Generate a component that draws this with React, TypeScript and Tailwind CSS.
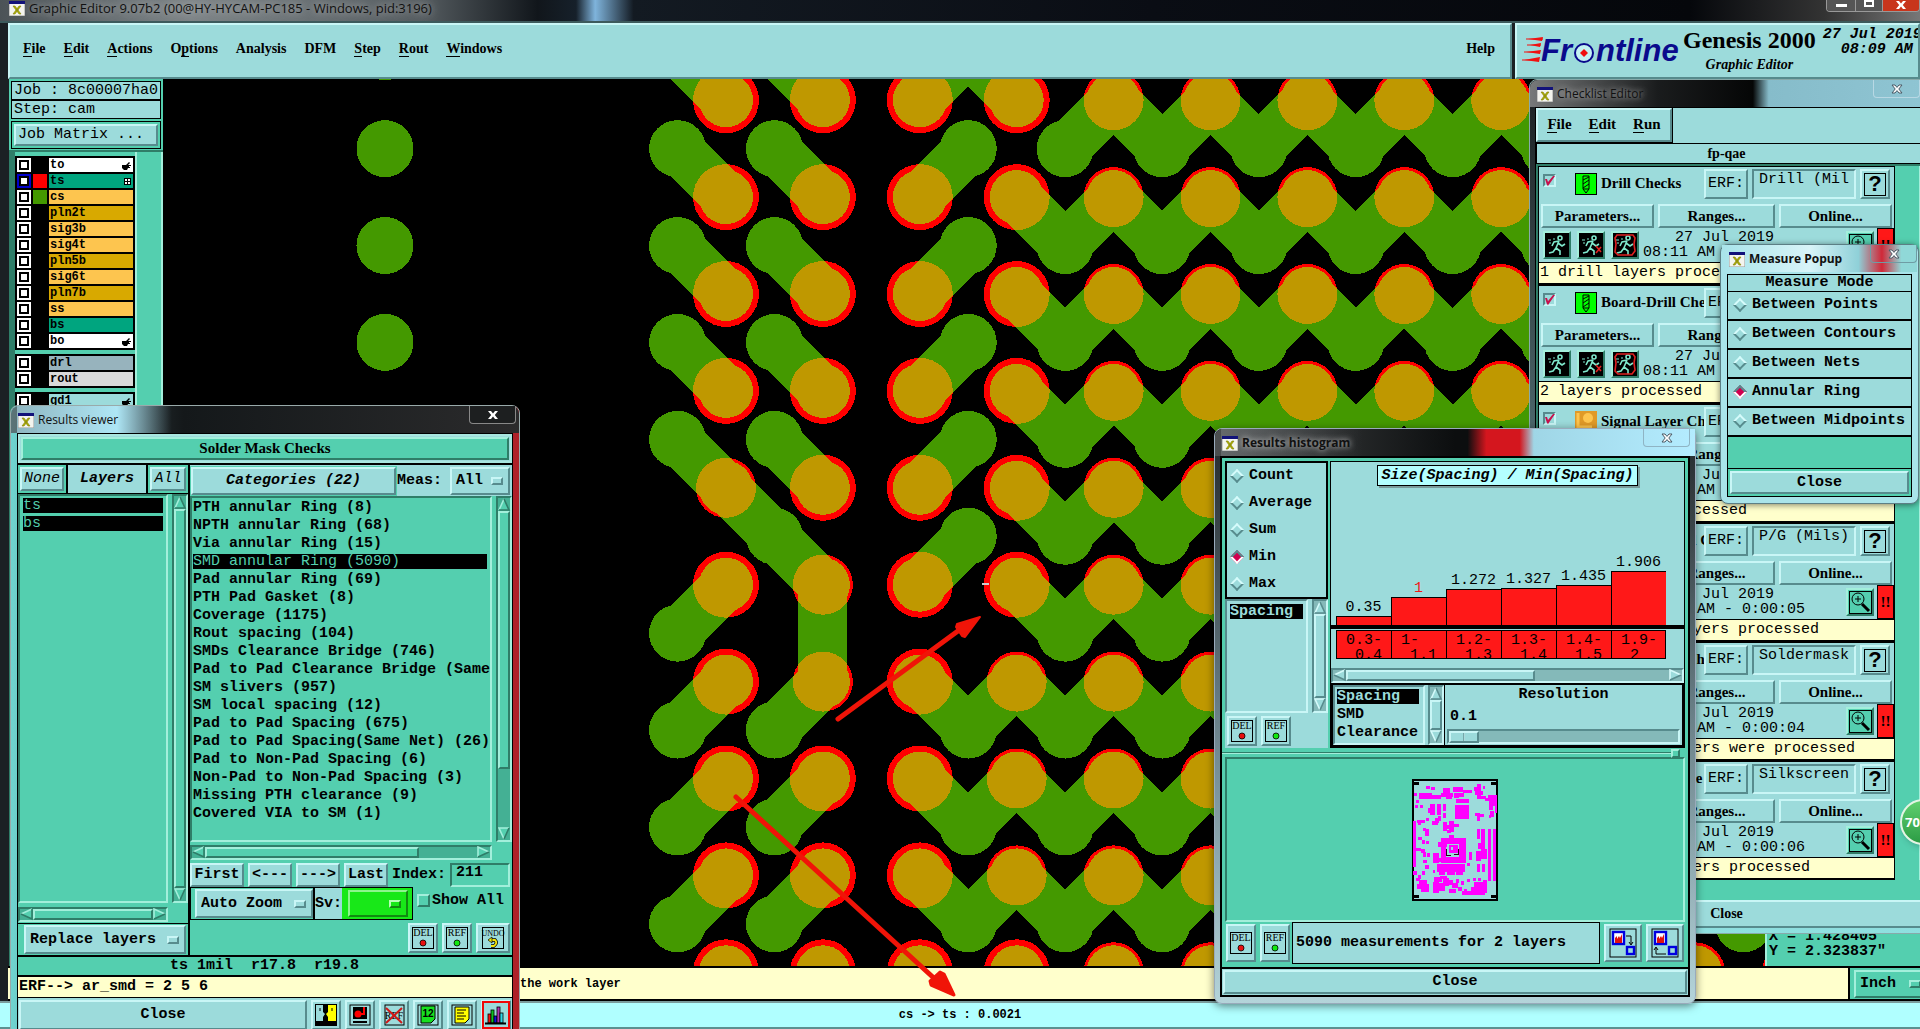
import { ReactNode } from "react";

const MONO = "font-['Liberation_Mono',monospace]";
const SERIF = "font-['Liberation_Serif',serif] font-bold";
const SANS = "font-['Open_Sans',sans-serif]";

const RAISED = "border-2 border-t-[#c9f6f6] border-l-[#c9f6f6] border-b-[#578b8d] border-r-[#578b8d] bg-[#9cdbdb]";
const SUNKEN = "border-2 border-t-[#578b8d] border-l-[#578b8d] border-b-[#c9f6f6] border-r-[#c9f6f6]";
const TEAL_RAISED = "border-2 border-t-[#a3efdb] border-l-[#a3efdb] border-b-[#2f7d68] border-r-[#2f7d68] bg-[#54cfaf]";
const TEAL_SUNKEN = "border-2 border-t-[#2f7d68] border-l-[#2f7d68] border-b-[#a3efdb] border-r-[#a3efdb]";

const menus = [
  { name: "File", hot: 0 },
  { name: "Edit", hot: 0 },
  { name: "Actions", hot: 0 },
  { name: "Options", hot: 1 },
  { name: "Analysis", hot: -1 },
  { name: "DFM", hot: -1 },
  { name: "Step", hot: 0 },
  { name: "Rout", hot: 0 },
  { name: "Windows", hot: 0 },
];

const layerGroups = [
  [
    { name: "to", bg: "bg-white", swatch: "bg-black", mark: "hand" },
    { name: "ts", bg: "bg-[#00a57f]", swatch: "bg-[#ff0000]", mark: "grid", active: true },
    { name: "cs", bg: "bg-[#fdc54f]", swatch: "bg-[#449900]" },
    { name: "pln2t", bg: "bg-[#d8a900]", swatch: "bg-black" },
    { name: "sig3b", bg: "bg-[#fdc54f]", swatch: "bg-black" },
    { name: "sig4t", bg: "bg-[#fdc54f]", swatch: "bg-black" },
    { name: "pln5b", bg: "bg-[#d8a900]", swatch: "bg-black" },
    { name: "sig6t", bg: "bg-[#fdc54f]", swatch: "bg-black" },
    { name: "pln7b", bg: "bg-[#d8a900]", swatch: "bg-black" },
    { name: "ss", bg: "bg-[#fdc54f]", swatch: "bg-black" },
    { name: "bs", bg: "bg-[#00a57f]", swatch: "bg-black" },
    { name: "bo", bg: "bg-white", swatch: "bg-black", mark: "hand" },
  ],
  [
    { name: "drl", bg: "bg-[#97b3bd]", swatch: "bg-black" },
    { name: "rout", bg: "bg-[#d9d9d9]", swatch: "bg-black" },
  ],
  [{ name: "gd1", bg: "bg-[#9cdbdb]", swatch: "bg-black", mark: "hand" }],
] as { name: string; bg: string; swatch: string; mark?: string; active?: boolean }[][];

const categories = [
  "PTH annular Ring (8)",
  "NPTH annular Ring (68)",
  "Via annular Ring (15)",
  "SMD annular Ring (5090)",
  "Pad annular Ring (69)",
  "PTH Pad Gasket (8)",
  "Coverage (1175)",
  "Rout spacing (104)",
  "SMDs Clearance Bridge (746)",
  "Pad to Pad Clearance Bridge (Same",
  "SM slivers (957)",
  "SM local spacing (12)",
  "Pad to Pad Spacing (675)",
  "Pad to Pad Spacing(Same Net) (26)",
  "Pad to Non-Pad Spacing (6)",
  "Non-Pad to Non-Pad Spacing (3)",
  "Missing PTH clearance (9)",
  "Covered VIA to SM (1)",
];

const bars = [
  { value: "0.35", height: 9, from: "0.3-", to: "0.4" },
  { value: "1", height: 28, from: "1-", to: "1.1" },
  { value: "1.272", height: 36, from: "1.2-", to: "1.3" },
  { value: "1.327", height: 37, from: "1.3-", to: "1.4" },
  { value: "1.435", height: 40, from: "1.4-", to: "1.5" },
  { value: "1.906", height: 54, from: "1.9-", to: "2" },
];

const checks = [
  { title: "Drill Checks", erf: "Drill (Mil", took: "0:00:01", result: "1 drill layers processed", icon: "drill" },
  { title: "Board-Drill Checks", erf: "Board (Mils", took: "0:00:01", result: "2 layers processed", icon: "drill" },
  { title: "Signal Layer Checks", erf: "Signal", took: "0:00:12", result: "4 layers were processed", icon: "signal" },
  { title: "Power/Ground Checks", erf: "P/G (Mils)", took: "0:00:05", result: "2 power/ground layers processed", icon: "signal" },
  { title: "Solder Mask Check", erf: "Soldermask", took: "0:00:04", result: "2 solder mask layers were processed", icon: "signal" },
  { title: "Silk Screen Che", erf: "Silkscreen", took: "0:00:06", result: "2 silk screen layers processed", icon: "signal" },
];

/* ---------- small parts ---------- */

function Hot({ name, hot }: { name: string; hot: number }) {
  if (hot < 0) return <>{name}</>;
  return (
    <>
      {name.slice(0, hot)}
      <span className="border-b border-black">{name[hot]}</span>
      {name.slice(hot + 1)}
    </>
  );
}

function XIcon() {
  return (
    <svg width="16" height="15" viewBox="0 0 16 15" className="shrink-0">
      <rect width="16" height="15" fill="#f4f4ee" stroke="#999" />
      <rect width="16" height="3" fill="#12127a" />
      <path d="M4 5h2l6 8h-2z M10 5h2l-6 8h-2z" fill="#b0b000" stroke="#80800a" strokeWidth="0.6" />
    </svg>
  );
}

function CloseGlyph({ outline = false }: { outline?: boolean }) {
  return (
    <svg width="12" height="10" viewBox="0 0 12 10">
      <path
        d="M1 1h3l2 2.4L8 1h3L7.8 5 11 9H8L6 6.6 4 9H1l3.2-4z"
        fill="#fff"
        stroke={outline ? "#4a5a66" : "none"}
        strokeWidth="1"
      />
    </svg>
  );
}

function TitleBar({ title, close, outline = false, glow = "" }: { title: string; close: string; outline?: boolean; glow?: string }) {
  return (
    <div className="flex h-[27px] items-start justify-between">
      <div className="flex items-center gap-1 pt-[6px] pl-[1px]">
        <XIcon />
        <span className={`${SANS} ${glow} text-[12px] leading-4 text-[#111]`}>{title}</span>
      </div>
      <button aria-label="Close window" className={`flex h-[18px] w-[47px] items-center justify-center rounded-b border border-t-0 ${close}`}>
        <CloseGlyph outline={outline} />
      </button>
    </div>
  );
}

function Arrow({ dir, teal = false }: { dir: "up" | "down" | "left" | "right"; teal?: boolean }) {
  const shapes = { up: "M6 1 11 12H1z", down: "M6 12 1 1h10z", left: "M1 6 12 1v10z", right: "M12 6 1 1v10z" };
  const light = teal ? "#a3efdb" : "#d6fbfb";
  const dark = teal ? "#2f7d68" : "#578b8d";
  const edges = {
    up: ["M6 1 1 12", "M1 12h10L6 1"],
    down: ["M11 1H1l5 11", "M6 12 11 1"],
    left: ["M1 6 12 1", "M1 6l11 5V1"],
    right: ["M1 11V1l11 5", "M12 6 1 11"],
  };
  return (
    <svg width="13" height="13" viewBox="0 0 13 13" className="shrink-0" fill="none">
      <path d={shapes[dir]} fill={teal ? "#54cfaf" : "#9cdbdb"} />
      <path d={edges[dir][0]} stroke={light} strokeWidth="1.6" />
      <path d={edges[dir][1]} stroke={dark} strokeWidth="1.6" />
    </svg>
  );
}

function VScroll({ teal = false, thumb = "flex-1" }: { teal?: boolean; thumb?: string }) {
  return (
    <div className={`flex w-4 shrink-0 flex-col items-center ${teal ? `${TEAL_SUNKEN} bg-[#44b094]` : `${SUNKEN} bg-[#84b9b9]`}`}>
      <Arrow dir="up" teal={teal} />
      <div className={`w-full ${thumb} ${teal ? TEAL_RAISED : RAISED}`} />
      {thumb !== "flex-1" && <div className="flex-1" />}
      <Arrow dir="down" teal={teal} />
    </div>
  );
}

function HScroll({ teal = false, thumb = "flex-1", className = "" }: { teal?: boolean; thumb?: string; className?: string }) {
  return (
    <div className={`flex h-[15px] items-center ${className} ${teal ? `${TEAL_SUNKEN} bg-[#44b094]` : `${SUNKEN} bg-[#84b9b9]`}`}>
      <Arrow dir="left" teal={teal} />
      <div className={`h-full ${thumb} ${teal ? TEAL_RAISED : RAISED}`} />
      {thumb !== "flex-1" && <div className="flex-1" />}
      <Arrow dir="right" teal={teal} />
    </div>
  );
}

function OptionMenu({ label, value, className = "", box = RAISED, bar = RAISED }: { label: string; value: string; className?: string; box?: string; bar?: string }) {
  return (
    <div className={`relative flex items-center ${box} ${className}`}>
      <select aria-label={label} className="h-full w-full appearance-none bg-transparent pl-1 font-bold outline-none">
        <option>{value}</option>
      </select>
      <span className={`pointer-events-none absolute right-[5px] h-2 w-3 ${bar}`} />
    </div>
  );
}

function Radio({ name, label, checked = false }: { name: string; label: string; checked?: boolean }) {
  return (
    <label className="flex items-center gap-[5px]">
      <input
        type="radio"
        name={name}
        defaultChecked={checked}
        className="m-[2px] size-[10px] rotate-45 appearance-none border-2 border-t-[#d6fbfb] border-l-[#d6fbfb] border-r-[#578b8d] border-b-[#578b8d] bg-[#9cdbdb] checked:border-t-[#578b8d] checked:border-l-[#578b8d] checked:border-r-white checked:border-b-white checked:bg-[#d1004f]"
      />
      {label}
    </label>
  );
}

function IconButton({ label, className = "", children }: { label: string; className?: string; children: ReactNode }) {
  return (
    <button aria-label={label} className={`flex size-[30px] shrink-0 items-center justify-center ${RAISED} ${className}`}>
      {children}
    </button>
  );
}

function TagIcon({ text, color }: { text: string; color?: string }) {
  return (
    <svg width="24" height="24" viewBox="0 0 24 24" fontFamily="Liberation Serif, serif" fontWeight="normal" fontSize={text.length > 3 ? 8 : 10} textAnchor="middle">
      <rect x="1.5" y="1.5" width="21" height="21" fill="none" stroke="#000" />
      <text x="12" y="10">{text}</text>
      {color ? (
        <circle cx="12" cy="17" r="3" fill={color} stroke="#000" strokeWidth="0.8" />
      ) : (
        <>
          <path d="M10 14h4q3 3-1 6h-3" fill="none" stroke="#000" strokeWidth="3.4" />
          <path d="M10 14h4q3 3-1 6h-3" fill="none" stroke="#f4e60a" strokeWidth="1.8" />
          <path d="m11 11-4 3 4 3z" fill="#f4e60a" stroke="#000" strokeWidth="0.7" />
        </>
      )}
    </svg>
  );
}

function DelRef({ className = "" }: { className?: string }) {
  return (
    <>
      <IconButton label="Delete" className={className}><TagIcon text="DEL" color="#e81010" /></IconButton>
      <IconButton label="Refresh" className={className}><TagIcon text="REF" color="#10e810" /></IconButton>
    </>
  );
}

function Hand() {
  return (
    <svg width="9" height="9" viewBox="0 0 9 9">
      <path d="M0 4h4l3-3 1 1-2 2h3v1H7v1h1v1H6L5 9H2L0 7z" />
    </svg>
  );
}

function GridMark() {
  return (
    <svg width="7" height="7" viewBox="0 0 7 7" shapeRendering="crispEdges">
      <path d="M0 0h7v7H0z" />
      <path d="M1 1h2v2H1zM4 1h2v2H4zM1 4h2v2H1zM4 4h2v2H4z" fill="#fff" />
    </svg>
  );
}

/* ---------- main window ---------- */

function Frontline() {
  return (
    <svg width="162" height="32" viewBox="0 0 162 32" fontFamily="Liberation Sans, sans-serif" fontSize="31" fontWeight="bold" fontStyle="italic" fill="#0a0a8c">
      <path d="M7 4 22 2 21 6z M9 10 20 8 19 12z M5 17 20 15 19 19z M3 25 19 22 18 27z" fill="#f01010" />
      <path d="M5 4h17M6 10h14M3 17h16M1 25h17" stroke="#f01010" />
      <text x="20" y="26">Fr</text>
      <circle cx="63" cy="18" r="9" fill="#c4f2f2" stroke="#0a0a8c" strokeWidth="2" />
      <path d="m63 14 4 4-4 4-4-4z" fill="#f01010" />
      <text x="75" y="26">ntline</text>
    </svg>
  );
}

function Header() {
  return (
    <header className="flex h-[58px] shrink-0 gap-[3px] border-t-2 border-[#3d5a5c] pl-2">
      <nav className={`flex flex-1 items-center justify-between pr-[15px] pb-1 pl-[13px] ${SERIF} text-[14px] ${RAISED}`}>
        <div className="flex gap-[18px]">
          {menus.map((m) => (
            <button key={m.name}><Hot {...m} /></button>
          ))}
        </div>
        <button>Help</button>
      </nav>
      <div className={`flex w-[405px] items-start overflow-hidden pt-[2px] pl-[4px] ${RAISED}`}>
        <div className="shrink-0 pt-[8px]"><Frontline /></div>
        <div className={`shrink-0 text-center ${SERIF}`}>
          <div className="text-[24px] leading-[26px]">Genesis 2000</div>
          <div className="text-[14px] leading-6 italic">Graphic Editor</div>
        </div>
        <div className={`${MONO} ml-[7px] shrink-0 text-right font-bold italic leading-[15px]`}>
          27 Jul 2019<br />08:09 AM&nbsp;
        </div>
      </div>
    </header>
  );
}

function LayerPanel() {
  return (
    <aside className={`${MONO} ml-[9px] flex w-[154px] shrink-0 flex-col overflow-hidden bg-[#54cfaf] pt-[2px]`}>
      <div className="mx-[2px] h-[19px] border border-black bg-[#9cdbdb] pl-[2px] whitespace-pre">Job : 8c00007ha0</div>
      <div className="mx-[2px] h-[19px] border border-black bg-[#9cdbdb] pl-[2px]">Step: cam</div>
      <div className="mx-[2px] mt-[2px] border border-black p-[2px]">
        <button className={`h-[22px] w-full pl-[2px] text-left leading-[18px] ${RAISED}`}>Job Matrix ...</button>
      </div>
      <div className="mt-[1px] flex flex-1 border-t-2 border-[#2f7d68]">
        <div className="flex w-[128px] flex-col gap-1 border-r-2 border-l-6 border-r-[#a3efdb] border-l-[#2f7d68] pt-1">
          {layerGroups.map((group, i) => (
            <ul key={i} className="flex flex-col gap-[2px] border border-black bg-black px-[1px] py-[1px]">
              {group.map((l) => (
                <li key={l.name}>
                  <label className="flex h-[14px] items-stretch gap-[2px] text-[12px] leading-[14px] font-bold">
                    <span className={`flex w-[14px] items-center justify-center ${l.active ? "bg-[#0000cc]" : "bg-white"}`}>
                      <input type="checkbox" className="size-[10px] appearance-none border-2 border-black bg-white" />
                    </span>
                    <span className={`w-[14px] ${l.swatch}`} />
                    <span className={`flex flex-1 items-center justify-between pr-[2px] pl-[1px] ${l.bg}`}>
                      {l.name}
                      {l.mark === "hand" && <Hand />}
                      {l.mark === "grid" && <GridMark />}
                    </span>
                  </label>
                </li>
              ))}
            </ul>
          ))}
        </div>
        <div className="flex-1 border-r-2 border-[#a3efdb]" />
      </div>
    </aside>
  );
}

const PITCH = 96.9;
const padX = (c: number) => 726 + PITCH * c;
const padY = (r: number) => 100.2 + PITCH * r;

type Point = [number, number];
type Trace = [Point, Point];

function buildBoard() {
  const traces: Trace[] = [];
  const vias: Point[] = [];
  const half = PITCH / 2;
  const link = (c: number, r: number, dx: number, dy: number) => {
    const via: Point = [padX(c) + half * dx, padY(r) + half * dy];
    traces.push([[padX(c), padY(r)], via]);
    vias.push(via);
  };
  for (let r = 0; r <= 4; r++) {
    link(0, r, -1, -1);
    link(1, r, -1, -1);
  }
  for (let r = 5; r <= 8; r++) link(0, r, -1, 1);
  for (let r = 6; r <= 8; r++) link(1, r, -1, 1);
  for (let r = 0; r <= 5; r++) link(2, r, 1, -1);
  link(0, 4, 1, 1);
  link(1, 5, -1, -1);
  traces.push([[padX(1), padY(5)], [padX(1), padY(6)]]);
  link(3, 0, -1, -1);
  for (let r = 0; r <= 8; r++) {
    const first = r === 0 ? 4 : r < 6 ? 3 : 2;
    if (r === 0) link(4, 0, -1, 1);
    for (let c = first; c < 12; c++) {
      link(c, r, 1, 1);
      link(c + 1, r, -1, 1);
    }
  }
  for (let r = -1; r < 4; r++) vias.push([385, 148.6 + PITCH * r]);
  return { traces, vias };
}

function isEndPad(c: number, r: number) {
  if (r === 9) return c < 4;
  if (c === 0) return r !== 4;
  if (c === 1) return r !== 5 && r !== 6;
  if (c === 2) return true;
  if (c === 3) return r < 6;
  return false;
}

function Board() {
  const { traces, vias } = buildBoard();
  const pads: Point[] = [];
  for (let r = 0; r < 10; r++) for (let c = 0; c < 13; c++) pads.push([c, r]);
  const copper = (color: string) => (
    <g fill={color} stroke="none">
      {traces.map(([a, b], i) => (
        <line key={i} x1={a[0]} y1={a[1]} x2={b[0]} y2={b[1]} stroke={color} strokeWidth="49" />
      ))}
      {vias.map(([x, y], i) => (
        <circle key={i} cx={x} cy={y} r="28.5" />
      ))}
      {pads.map(([c, r], i) => (
        <circle key={i} cx={padX(c)} cy={padY(r)} r="27" />
      ))}
    </g>
  );
  const openings = (color: string) => (
    <g fill={color}>
      {pads.map(([c, r], i) => (
        <circle key={i} cx={padX(c)} cy={padY(r)} r={isEndPad(c, r) ? 33 : 30} />
      ))}
    </g>
  );
  return (
    <svg className="absolute inset-0 size-full" shapeRendering="crispEdges">
      <defs>
        <mask id="copper" maskUnits="userSpaceOnUse" x="0" y="0" width="2000" height="1100">
          {copper("#fff")}
        </mask>
      </defs>
      <g transform="translate(-163 -79)">
        {copper("#449900")}
        {openings("#ff0000")}
        <g mask="url(#copper)">{openings("#bf9800")}</g>
        <rect x="982" y="583" width="7" height="2" fill="#ccc" />
      </g>
    </svg>
  );
}

function MarkerArrows() {
  return (
    <svg className="pointer-events-none absolute inset-0 size-full" fill="#f01408" stroke="#f01408" strokeLinecap="round" strokeLinejoin="round">
      <path d="M838 719 962 628" strokeWidth="5" />
      <path d="m980 617-15 20-3-1-6-9 1-3z" strokeWidth="2" />
      <path d="M736 797 936 980" strokeWidth="5" />
      <path d="m954 995-23-10-1-4 10-9 4 2z" strokeWidth="3" />
    </svg>
  );
}

/* ---------- results viewer ---------- */

const boxed = "border border-black";

function ResultsViewer() {
  return (
    <section className="absolute top-[405px] left-[10px] w-[510px] rounded-t-lg border border-[#9aa] bg-linear-to-r from-[#6fd3cf] via-[#20282b] to-[#b02028] px-[6px]">
      <div className="-mx-[6px] rounded-t-lg bg-linear-to-r from-[#5b7478] from-0% via-[#14181a] via-34% to-[#2b2b2c] px-[6px] pr-[3px]">
        <div className="bg-linear-to-r from-[#8fb7c2] via-[#aee6f5] via-20% to-transparent to-31%">
          <TitleBar title="Results viewer" close="border-[#888] bg-[#1d1f20]" />
        </div>
      </div>
      <div className={`${MONO} flex h-[640px] flex-col border border-black bg-[#54cfaf] font-bold`}>
        <div className="border-2 border-[#a8e6df] bg-[#9cdbdb] p-[1px]">
          <h2 className={`h-[23px] text-center ${SERIF} text-[15px] leading-[19px] ${TEAL_RAISED}`}>Solder Mask Checks</h2>
        </div>
        <div className="flex border-y-2 border-black">
          <div className="flex w-[172px] shrink-0 flex-col border-r-2 border-black">
            <div className="flex h-[29px] items-stretch border-b border-black italic">
              <div className="p-[2px]"><button className={`h-full w-[44px] font-normal italic ${RAISED}`}>None</button></div>
              <h3 className="flex-1 border-x-2 border-black bg-[#9cdbdb] text-center leading-[27px]">Layers</h3>
              <div className="p-[2px]"><button className={`h-full w-[36px] font-normal italic ${RAISED}`}>All</button></div>
            </div>
            <div className="flex h-[409px] gap-1">
              <ul className={`flex-1 pt-[2px] pr-[3px] pl-[3px] text-[#54cfaf] ${TEAL_SUNKEN}`}>
                <li className="mb-[3px] bg-black leading-[15px] font-normal">ts</li>
                <li className="mb-[3px] bg-black leading-[15px] font-normal">bs</li>
              </ul>
              <VScroll teal />
            </div>
            <HScroll teal className="mt-1 mr-5" />
            <div className="mt-[1px] border-t border-black bg-[#54cfaf] py-[1px] pr-[2px] pl-[6px]">
              <OptionMenu label="Layer action" value="Replace layers" className="h-[29px]" />
            </div>
          </div>
          <div className="flex min-w-0 flex-1 flex-col">
            <div className="flex h-[31px] items-center bg-[#9cdbdb]">
              <div className="bg-[#54cfaf] p-[1px]"><button className={`h-[28px] w-[205px] font-bold italic ${RAISED}`}>Categories (22)</button></div>
              <label className="flex-1">Meas:</label>
              <OptionMenu label="Meas" value="All" className="mr-[2px] h-[28px] w-[60px]" />
            </div>
            <div className="flex h-[346px] gap-1">
              <ul className={`min-w-0 flex-1 overflow-hidden pt-[2px] pr-[3px] pl-[1px] ${TEAL_SUNKEN}`}>
                {categories.map((c, i) => (
                  <li key={c} className={`mb-[3px] h-[15px] leading-[15px] whitespace-pre ${i === 3 ? "bg-black font-normal text-[#54cfaf]" : ""}`}>{c}</li>
                ))}
              </ul>
              <VScroll teal thumb="h-[258px]" />
            </div>
            <HScroll teal thumb="w-[214px]" className="mt-[3px] mr-5" />
            <div className="mt-[2px] flex h-[25px] items-center gap-1">
              <button className={`h-6 w-[54px] ${RAISED}`}>First</button>
              <button className={`h-6 w-[44px] ${RAISED}`}>&lt;---</button>
              <button className={`h-6 w-[44px] ${RAISED}`}>---&gt;</button>
              <button className={`h-6 w-[44px] ${RAISED}`}>Last</button>
              <label htmlFor="index">Index:</label>
              <input id="index" defaultValue="211" className={`h-6 w-[60px] pb-1 pl-1 ${TEAL_SUNKEN}`} />
            </div>
            <div className="flex items-center">
              <div className={`flex h-[33px] items-center pl-1 ${boxed}`}>
                <OptionMenu label="Zoom" value="Auto Zoom" className="h-[29px] w-[118px]" />
                <span className="h-full border-l-2 border-black bg-[#9cdbdb] leading-[31px]">Sv:</span>
                <div className="h-full bg-[#18e818] px-[4px] py-[2px] pl-[6px]">
                  <OptionMenu label="Sv" value="" className="h-[27px] w-[60px]" box="border-2 border-t-[#8df58d] border-l-[#8df58d] border-b-[#118a11] border-r-[#118a11]" bar="border-2 border-t-[#b6ffb6] border-l-[#b6ffb6] border-b-[#118a11] border-r-[#118a11]" />
                </div>
              </div>
              <label className="ml-[4px] flex items-center gap-[2px] pb-[6px]">
                <input type="checkbox" className={`size-[13px] appearance-none ${TEAL_RAISED}`} />
                Show All
              </label>
            </div>
            <div className="flex items-center justify-end gap-[4px] pt-[3px] pr-[2px]">
              <DelRef />
              <IconButton label="Undo" className="w-[34px]"><TagIcon text="UNDO" /></IconButton>
            </div>
          </div>
        </div>
        <p className="h-5 border-b-2 border-black pl-[152px] whitespace-pre">{"ts 1mil  r17.8  r19.8"}</p>
        <p className="h-[21px] border-b border-black bg-[#ffffcc] pl-[1px] leading-5">ERF--&gt; ar_smd = 2 5 6</p>
        <div className="flex gap-1 bg-[#9cdbdb] pt-[2px] pl-[1px]">
          <button className={`h-[30px] w-[288px] ${RAISED}`}>Close</button>
          <IconButton label="Compare">
            <svg width="22" height="22" viewBox="0 0 22 22"><rect width="22" height="22" /><path d="M1 1h7v7l2 2-2 3v4H1z" fill="#9cdbdb" /><path d="M13 1h8v16h-8v-4l-2-3 2-2z" fill="#ff0" /><path d="M5 4v3M17 4v3" stroke="#000" /></svg>
          </IconButton>
          <IconButton label="Snapshot">
            <svg width="22" height="22" viewBox="0 0 22 22"><rect x="1" y="1" width="20" height="20" fill="none" stroke="#000" /><rect x="4" y="3" width="14" height="12" /><circle cx="9" cy="10" r="3.5" fill="#f00" /><path d="M12 10h3V3" stroke="#f00" strokeWidth="2" fill="none" /><path d="M4 18h14" stroke="#000" strokeWidth="2" /></svg>
          </IconButton>
          <IconButton label="Remove reference">
            <svg width="24" height="22" viewBox="0 0 24 22" fontFamily="Liberation Serif, serif" fontWeight="normal" fontSize="10"><rect x="3" y="1" width="19" height="20" fill="none" stroke="#000" /><text x="12" y="15" textAnchor="middle">REF</text><path d="m4 4 16 15M20 4 4 19" stroke="#d01818" strokeWidth="2" /></svg>
          </IconButton>
          <IconButton label="Numbers">
            <svg width="22" height="22" viewBox="0 0 22 22" fontFamily="Liberation Sans, sans-serif" fontSize="10" fontWeight="bold"><rect x="1" y="1" width="20" height="20" fill="none" stroke="#000" /><path d="M4 2h14v13l-4 4H4z" fill="#18e020" stroke="#000" /><text x="11" y="13" textAnchor="middle">12</text></svg>
          </IconButton>
          <IconButton label="Notes">
            <svg width="22" height="22" viewBox="0 0 22 22"><rect x="1" y="1" width="20" height="20" fill="none" stroke="#000" /><path d="M4 3h14v12l-4 4H4z" fill="#ff0" stroke="#000" /><path d="M6 6h9M6 9h7M6 12h9M6 15h7" stroke="#000" /></svg>
          </IconButton>
          <IconButton label="Histogram" className="outline-2 -outline-offset-3 outline-[#f00808]">
            <svg width="22" height="22" viewBox="0 0 22 22" stroke="#000" strokeWidth="0.8"><rect x="3" y="10" width="3" height="9" fill="#f01010" /><rect x="6" y="6" width="3" height="13" fill="#10c020" /><rect x="9" y="12" width="3" height="7" fill="#1010e0" /><rect x="12" y="3" width="3" height="16" fill="#b030b0" /><rect x="15" y="9" width="3" height="10" fill="#30d8e8" /><path d="M0 19.5h21" strokeWidth="2" /></svg>
          </IconButton>
        </div>
      </div>
    </section>
  );
}

/* ---------- histogram ---------- */

// x, y, width, height of the marked areas on the thumbnail
const marks = [
  [60, 42, 12, 9], [74, 44, 12, 10], [24, 63, 8, 8], [38, 62, 40, 18], [30, 84, 8, 8], [78, 68, 26, 12], [112, 48, 20, 20], [106, 62, 36, 14],
  [140, 44, 30, 16], [120, 72, 18, 10], [144, 62, 16, 16], [172, 54, 26, 8], [160, 64, 14, 12], [150, 80, 38, 12], [146, 98, 42, 42], [204, 46, 20, 10],
  [214, 36, 12, 46], [206, 58, 24, 12], [224, 72, 16, 8], [230, 42, 8, 10], [246, 68, 26, 16], [238, 78, 16, 10], [250, 84, 20, 18], [266, 78, 8, 44],
  [250, 102, 10, 12], [252, 118, 12, 18], [248, 128, 6, 10], [28, 98, 8, 10], [42, 98, 8, 10], [72, 96, 14, 34], [66, 108, 8, 14], [94, 96, 10, 34],
  [110, 96, 10, 20], [110, 124, 10, 14], [96, 132, 8, 16], [78, 146, 18, 14], [86, 138, 12, 14], [206, 124, 16, 8], [214, 132, 8, 14], [222, 126, 12, 8],
  [32, 144, 24, 10], [36, 152, 10, 6], [60, 138, 10, 8], [112, 150, 12, 26], [118, 160, 26, 12], [130, 146, 14, 34], [144, 156, 14, 8], [124, 174, 10, 8],
  [52, 168, 8, 10], [56, 172, 12, 20], [36, 196, 12, 8], [130, 188, 14, 10], [22, 148, 8, 136], [48, 204, 8, 12], [60, 206, 8, 10], [104, 198, 76, 18],
  [96, 210, 26, 16], [104, 214, 16, 58], [160, 198, 20, 76], [118, 256, 60, 16], [130, 220, 26, 24], [80, 244, 18, 28], [92, 258, 20, 12], [28, 228, 18, 10],
  [44, 232, 14, 10], [52, 240, 8, 16], [64, 244, 8, 10], [50, 264, 14, 10], [58, 278, 10, 12], [188, 240, 10, 24], [214, 172, 8, 28], [226, 172, 10, 58],
  [216, 214, 12, 18], [210, 236, 16, 30], [226, 230, 16, 30], [214, 276, 8, 24], [228, 276, 8, 24], [245, 172, 10, 154], [260, 172, 10, 154], [184, 272, 8, 10],
  [92, 276, 84, 24], [100, 298, 18, 10], [124, 298, 22, 10], [150, 296, 20, 12], [80, 294, 8, 10], [22, 298, 10, 10], [48, 298, 8, 12], [36, 308, 8, 14],
  [30, 318, 12, 10], [40, 324, 22, 12], [34, 336, 34, 14], [46, 350, 14, 10], [58, 340, 10, 20], [84, 316, 24, 14], [80, 330, 18, 32], [102, 312, 20, 10],
  [112, 318, 16, 24], [100, 334, 16, 22], [126, 324, 14, 16], [138, 334, 18, 14], [128, 350, 22, 14], [150, 320, 8, 12], [164, 328, 10, 12], [156, 346, 12, 10],
  [174, 352, 10, 10], [184, 320, 8, 10], [200, 318, 10, 8], [216, 318, 10, 8], [204, 330, 38, 34], [230, 324, 14, 20], [168, 358, 70, 10], [196, 346, 10, 14],
];

function Thumbnail() {
  return (
    <svg width="86" height="122" viewBox="18 21 258 366" shapeRendering="crispEdges">
      <rect x="20" y="23" width="254" height="362" fill="#9cdbdb" stroke="#000" strokeWidth="6" />
      <path d="M22 30h16v8H22zM255 30h18v8h-18zM22 370h16v8H22zM255 370h18v8h-18z" />
      {marks.map(([x, y, w, h], i) => (
        <rect key={i} x={x} y={y} width={w} height={h} fill="#ff00ff" />
      ))}
      <rect x="134" y="226" width="8" height="8" fill="#9cdbdb" />
      <path d="M122 230v20h12M144 248h12v-16" fill="none" stroke="#302" strokeWidth="3" />
    </svg>
  );
}

function SwapIcon({ up = false }: { up?: boolean }) {
  return (
    <svg width="28" height="30" viewBox="0 0 28 30" fill="none">
      <rect x="1" y="1" width="26" height="28" stroke="#000" />
      <rect x="4" y="4" width="11" height="12" stroke="#0000e0" strokeWidth="2.4" fill="#fff" />
      <path d="M6 15v-5l2-2v3l2-3 1 2 2-4v9z" fill="#e01010" />
      <rect x="18" y="19" width="7" height="7" stroke="#0000e0" strokeWidth="2.4" />
      {up ? <path d="M5 20v6h10M3 22l2-3 2 3" stroke="#000" /> : <path d="M17 8h5v8m-2-2 2 3 2-3" stroke="#000" />}
    </svg>
  );
}

function ResultsHistogram() {
  return (
    <section className={`${MONO} absolute top-[428px] left-[1214px] w-[482px] rounded-lg border border-[#9ab] bg-linear-to-b from-[#24292c] via-[#6a8088] to-[#b4d4da] px-[5px] pb-[6px] font-bold shadow-[0_2px_8px_rgba(0,0,0,0.5)]`}>
      <div className="-mx-[5px] rounded-t-lg bg-linear-to-r from-[#4c4f50] via-[#0c0e0f] via-50% to-[#0c0e0f] pl-[6px]">
        <div className="bg-[linear-gradient(90deg,rgba(150,155,158,0.35)_0,transparent_30%,transparent_52%,#d4161e_56%,#d4161e_63%,#9fd6e6_66%,#b4ecff_100%)] pr-[5px]">
          <TitleBar title="Results histogram" close="border-[#8fb4c4]" outline glow="[text-shadow:0_0_6px_#ddd]" />
        </div>
      </div>
      <div className="border-2 border-black bg-[#54cfaf]">
        <div className="flex items-stretch gap-[2px] px-[3px] pt-[3px] pb-[1px]">
          <div className="flex w-[103px] shrink-0 flex-col bg-[#9cdbdb]">
            <div role="radiogroup" aria-label="Statistic" className="flex h-[138px] flex-col justify-between border-2 border-black px-[3px] py-[4px]">
              {["Count", "Average", "Sum", "Min", "Max"].map((m) => (
                <Radio key={m} name="stat" label={m} checked={m === "Min"} />
              ))}
            </div>
            <div className="flex h-[114px] gap-1">
              <ul className={`flex-1 px-[3px] py-[3px] ${SUNKEN}`}>
                <li className="bg-black leading-[15px] text-[#9cdbdb]">Spacing</li>
              </ul>
              <VScroll />
            </div>
            <div className="flex gap-1 p-[2px] pt-[3px]"><DelRef /></div>
          </div>
          <div className="flex min-w-0 flex-1 flex-col border border-black bg-[#9cdbdb]">
            <div className="flex h-[197px] flex-col items-center">
              <h3 className="mt-[3px] border border-black bg-[#b4ffff] px-[3px] leading-[19px] font-bold italic shadow-[2px_2px_0_#7a9c9c]">
                Size(Spacing) / Min(Spacing)
              </h3>
              <div className="flex w-full flex-1 items-end border-b-4 border-black pl-[5px]">
                {bars.map((b) => (
                  <div key={b.value} className="w-[55px] text-center font-normal">
                    <div className={`leading-4 ${b.value === "1" ? "text-[#f01818]" : ""}`}>{b.value}</div>
                    <div className="border-t border-l border-black bg-[#ff1818]" style={{ height: b.height }} />
                  </div>
                ))}
              </div>
              <div className="mt-[1px] flex h-[29px] w-full pl-[5px]">
                {bars.map((b) => (
                  <div key={b.value} className="w-[55px] overflow-hidden border border-r-0 border-black bg-[#ff1818] pt-[2px] pl-[9px] leading-[15px] font-normal whitespace-pre last:border-r">
                    {b.from}{"\n "}{b.to}
                  </div>
                ))}
              </div>
            </div>
            <HScroll thumb="w-[189px]" className="mt-[9px]" />
            <div className="flex flex-1 border-2 border-black">
              <ul className={`w-[92px] pt-[2px] pr-1 pl-[2px] ${SUNKEN}`}>
                <li className="mb-[3px] bg-black leading-[15px] text-[#9cdbdb]">Spacing</li>
                <li className="mb-[3px] leading-[15px]">SMD</li>
                <li className="leading-[15px]">Clearance</li>
              </ul>
              <div className="ml-[3px] flex"><VScroll /></div>
              <div className="flex flex-1 flex-col border-l border-black px-[2px]">
                <label htmlFor="resolution" className="text-center leading-5">Resolution</label>
                <span className="pl-[3px] leading-6">0.1</span>
                <input
                  id="resolution"
                  type="range"
                  defaultValue="0"
                  className="h-[15px] w-full appearance-none border-2 border-t-[#578b8d] border-l-[#578b8d] border-b-[#c9f6f6] border-r-[#c9f6f6] bg-[#84b9b9] [&::-webkit-slider-thumb]:h-3 [&::-webkit-slider-thumb]:w-[30px] [&::-webkit-slider-thumb]:appearance-none [&::-webkit-slider-thumb]:border-2 [&::-webkit-slider-thumb]:border-t-[#c9f6f6] [&::-webkit-slider-thumb]:border-l-[#c9f6f6] [&::-webkit-slider-thumb]:border-r-[#578b8d] [&::-webkit-slider-thumb]:border-b-[#578b8d] [&::-webkit-slider-thumb]:bg-[linear-gradient(90deg,#9cdbdb_46%,#578b8d_46%,#c9f6f6_54%,#9cdbdb_54%)]"
                />
              </div>
            </div>
          </div>
        </div>
        <div className="flex h-[8px] items-center">
          <div className="h-[2px] flex-1 border-t border-b border-t-[#2f7d68] border-b-[#a3efdb]" />
          <div className={`mr-2 size-[9px] ${TEAL_RAISED}`} />
        </div>
        <div className={`mx-[3px] flex h-[165px] items-center justify-center ${TEAL_SUNKEN}`}>
          <Thumbnail />
        </div>
        <div className="flex items-center gap-1 px-[4px] pb-[3px]">
          <DelRef className="h-[38px]" />
          <p className={`-ml-[2px] h-[42px] flex-1 bg-[#9cdbdb] pl-[3px] leading-10 ${boxed}`}>5090 measurements for 2 layers</p>
          <IconButton label="Move down" className="h-[38px] w-[38px]"><SwapIcon /></IconButton>
          <IconButton label="Move up" className="h-[38px] w-[38px]"><SwapIcon up /></IconButton>
        </div>
        <div className="border-t-2 border-black bg-[#9cdbdb] p-[1px]">
          <button className={`h-6 w-full font-bold ${RAISED}`}>Close</button>
        </div>
      </div>
    </section>
  );
}

/* ---------- checklist ---------- */

function RunIcon({ mode }: { mode: number }) {
  return (
    <svg width="24" height="24" viewBox="0 0 24 24" fill="none" stroke="#7fe8cc" strokeWidth="1.6">
      <rect width="24" height="24" fill="#000" stroke="none" />
      <circle cx="15" cy="5" r="2" />
      <path d="m14 8-5 1-2 4M14 8l-3 7 4 3v4M11 15l-3 4-4 1M13 10l4 3 3-2" />
      <path d="M3 7h3M4 10h2M8 6h2" strokeWidth="1" />
      {mode === 1 && <path d="m17 13 5 6m0-5-5 6" stroke="#e02020" />}
      {mode === 2 && <path d="M4 2h16l2 3-1 6 1 7-3 4H5l-3-3 1-8-1-6z" stroke="#e02020" />}
    </svg>
  );
}

function CheckIcon({ kind }: { kind: string }) {
  if (kind === "drill")
    return (
      <svg width="22" height="22" viewBox="0 0 22 22">
        <rect x="0.5" y="0.5" width="21" height="21" fill="#00ff00" stroke="#000" />
        <path d="M8 3h6v13l-3 4-3-4zM8 7l6-3M8 11l6-4M8 15l6-4M8 16h6" fill="none" stroke="#000" />
      </svg>
    );
  return (
    <svg width="22" height="22" viewBox="0 0 22 22">
      <rect width="22" height="22" fill="#e09a28" />
      <circle cx="13" cy="7" r="5" fill="#fdc54f" />
      <path d="M3 2v14h14" fill="none" stroke="#fdc54f" strokeWidth="3" />
    </svg>
  );
}

function CheckBlock({ title, erf, took, result, icon }: (typeof checks)[number]) {
  return (
    <article className="border-x border-t border-black bg-[#9cdbdb]">
      <div className="flex h-[37px] pt-[2px] pl-[4px]">
        <input type="checkbox" aria-label={title} defaultChecked className={`mt-[5px] size-[13px] appearance-none ${SUNKEN}`} />
        <svg className="pointer-events-none mt-[6px] -ml-[12px] shrink-0" width="11" height="11" viewBox="0 0 11 11">
          <path d="M1 4h2l1 3 5-6h2L4 11 3 10z" fill="#c8104c" />
        </svg>
        <div className="mt-1 ml-[20px] shrink-0"><CheckIcon kind={icon} /></div>
        <h3 className={`ml-1 w-[103px] shrink-0 overflow-hidden text-[15px] leading-7 whitespace-nowrap ${SERIF}`}>{title}</h3>
        <button className={`h-[30px] w-[44px] shrink-0 ${RAISED}`}>ERF:</button>
        <input aria-label={`${title} ERF`} defaultValue={erf} className={`ml-1 h-[30px] w-[104px] shrink-0 pb-[9px] pl-[5px] ${SUNKEN}`} />
        <IconButton label="Help" className="ml-1">
          <span className={`flex h-[23px] w-[22px] items-center justify-center font-['Liberation_Sans',sans-serif] text-[22px] font-bold ${boxed}`}>?</span>
        </IconButton>
      </div>
      <div className={`flex h-6 gap-1 px-[2px] text-[15px] leading-5 ${SERIF}`}>
        <button className={`w-[113px] ${RAISED}`}>Parameters...</button>
        <button className={`flex-1 ${RAISED}`}>Ranges...</button>
        <button className={`w-[113px] ${RAISED}`}>Online...</button>
      </div>
      <div className="flex h-[34px] items-center pl-[4px]">
        <div className="flex gap-[6px]">
          {[0, 1, 2].map((m) => (
            <button key={m} aria-label="Run" className={`flex size-[28px] items-center justify-center ${TEAL_RAISED}`}><RunIcon mode={m} /></button>
          ))}
        </div>
        <div className="ml-[4px] flex-1 text-left leading-[15px] whitespace-pre">
          <div className="pl-[32px]">27 Jul 2019</div>
          <div>08:11 AM - {took}</div>
        </div>
        <button aria-label="Zoom" className={`mr-[3px] flex size-[28px] items-center justify-center ${TEAL_RAISED}`}>
          <svg width="23" height="23" viewBox="0 0 23 23" fill="none" stroke="#000">
            <rect x="0.5" y="0.5" width="22" height="22" />
            <circle cx="9" cy="8" r="6" />
            <path d="M6 8h6M9 5v6" />
            <path d="m13 13 7 7" strokeWidth="3" />
          </svg>
        </button>
        <div className={`flex h-full w-[17px] items-center justify-center bg-[#ff1818] ${SERIF} ${boxed}`}>!!</div>
      </div>
      <p className="h-[23px] overflow-hidden border-t border-b-2 border-black bg-[#ffffcc] pl-[1px] leading-[19px] whitespace-pre">{result}</p>
    </article>
  );
}

function ChecklistEditor() {
  return (
    <section className={`${MONO} absolute top-[79px] left-[1529px] w-[400px] rounded-tl-lg border border-[#8aa] bg-linear-to-b from-[#1c2022] via-[#56777c] to-[#8fe0e0] px-[5px] pb-[5px]`}>
      <div className="-mx-[5px] rounded-tl-lg bg-[linear-gradient(90deg,#77797a_0,#1a1c1d_32%,#050606_56%,#86bcca_60%,#8fc5d3_100%)] pr-[8px] pl-[6px]">
        <TitleBar title="Checklist Editor" close="border-[#b8d8e4]" outline glow="[text-shadow:0_0_6px_#ddd]" />
      </div>
      <div className="border-t border-l border-black bg-[#9cdbdb]">
        <div className="w-[137px] border-r border-b border-black">
          <div className={`flex h-[34px] items-center justify-center gap-[17px] pb-[2px] ${SERIF} text-[15px] ${RAISED}`}>
            {["File", "Edit", "Run"].map((m) => (
              <button key={m}><Hot name={m} hot={0} /></button>
            ))}
          </div>
        </div>
        <h2 className={`h-[21px] pr-[6px] text-center ${SERIF} text-[14px] leading-[19px] ${boxed}`}>fp-qae</h2>
        <div className="flex border-t-2 border-l-2 border-[#2f7d68] bg-[#54cfaf]">
          <div className="w-[357px]">
            {checks.map((c) => (
              <CheckBlock key={c.title} {...c} />
            ))}
          </div>
          <div className="ml-[24px] w-[3px] bg-[#a3efdb]" />
        </div>
        <div className="bg-[#54cfaf] pt-[20px]">
          <button className={`h-[28px] w-[389px] pr-[8px] text-[14px] ${SERIF} ${RAISED}`}>Close</button>
        </div>
      </div>
    </section>
  );
}

function MeasurePopup() {
  const modes = ["Between Points", "Between Contours", "Between Nets", "Annular Ring", "Between Midpoints"];
  return (
    <section className={`${MONO} absolute top-[244px] left-[1720px] w-[199px] rounded-lg border border-[#5c7f85] bg-[#a9e4ea] px-[6px] pb-[6px] font-bold shadow-[0_1px_6px_rgba(0,0,0,0.5)]`}>
      <div className="-mx-[5px] bg-[linear-gradient(90deg,#a9e4ea_0,#d8f4f8_45%,#8fd0d8_70%,#d02838_82%,#90d8d8_92%)] pl-[6px]">
        <TitleBar title="Measure Popup" close="border-[#6f9ca4]" outline />
      </div>
      <div className="mt-[2px] border border-black bg-[#54cfaf]">
        <fieldset>
          <legend className="w-full border-b border-black bg-[#9cdbdb] text-center leading-4">Measure Mode</legend>
          {modes.map((m) => (
            <div key={m} className="h-[29px] border-b-2 border-black bg-[#9cdbdb] pt-[4px] pl-[5px]">
              <Radio name="measure" label={m} checked={m === "Annular Ring"} />
            </div>
          ))}
        </fieldset>
        <div className="mt-[31px] border-t border-black p-[2px]">
          <button className={`h-[23px] w-full font-bold leading-[19px] ${RAISED}`}>Close</button>
        </div>
      </div>
    </section>
  );
}

export default function App() {
  return (
    <div className="relative flex h-screen w-full flex-col overflow-hidden bg-[#1b2024] text-[15px] leading-[18px] text-black">
      <div className="flex h-[21px] shrink-0 items-start justify-between bg-[linear-gradient(90deg,#4c5357_0,#7d8487_10%,#555c60_22%,#11161b_28%,#16202a_30%,#7fb4dc_31%,#131a22_33%,#0a0d14_60%,#05070b_88%,#333_95%,#777_100%)] pl-[9px]">
        <div className="flex items-center gap-1">
          <XIcon />
          <h1 className={`${SANS} text-[13px] leading-4 whitespace-nowrap text-[#111] [text-shadow:0_0_8px_#ccc]`}>
            Graphic Editor 9.07b2 (00@HY-HYCAM-PC185 - Windows, pid:3196)
          </h1>
        </div>
        <div className="flex h-3 w-[94px] overflow-hidden rounded-b border-x border-b border-[#999]">
          <button aria-label="Minimize" className="flex w-[29px] items-start justify-center border-r border-[#999] bg-[#555] pt-1"><span className="h-[3px] w-[11px] bg-white" /></button>
          <button aria-label="Maximize" className="flex w-[27px] items-start justify-center border-r border-[#999] bg-[#555]"><span className="h-[7px] w-[10px] border-2 border-white" /></button>
          <button aria-label="Close" className="flex flex-1 items-start justify-center bg-[#c8351c]"><CloseGlyph /></button>
        </div>
      </div>

      <Header />

      <main className="flex min-h-0 flex-1">
        <LayerPanel />
        <div className="relative flex-1 overflow-hidden bg-black"><Board /></div>
        <div className={`${MONO} flex w-[155px] shrink-0 flex-col justify-end border-l-2 border-[#a3efdb] bg-[#54cfaf] pl-[2px] font-bold leading-[15px] whitespace-pre`}>
          <span>X = 1.428405"</span>
          <span className="pb-[7px]">Y = 2.323837"</span>
        </div>
      </main>

      <div className={`${MONO} ml-2 flex h-[35px] shrink-0 border-y-2 border-black bg-[#ffffcc]`}>
        <p className="flex-1 pl-[512px] text-[12px] leading-8 font-bold">the work layer</p>
        <div className="w-[72px] border-l-2 border-black bg-[#54cfaf] pt-[2px] pl-1">
          <OptionMenu label="Units" value="Inch" className="h-[28px] w-[74px]" box={TEAL_RAISED} bar={TEAL_RAISED} />
        </div>
      </div>
      <footer className={`${MONO} h-[28px] shrink-0 border-t-2 border-[#7a9c9c] bg-[#b0ffff] text-center text-[12px] leading-6 font-bold`}>
        <div className="border-b-2 border-[#5c9090]">cs -&gt; ts : 0.0021</div>
      </footer>

      <MarkerArrows />
      <ChecklistEditor />
      <ResultsViewer />
      <ResultsHistogram />
      <MeasurePopup />

      <div className="absolute top-[799px] right-[-26px] flex size-[46px] items-center rounded-full border-2 border-[#e4f4e4] bg-linear-to-b from-[#5fd06f] to-[#2b9c45] pl-[3px] shadow-md">
        <span className={`${SANS} text-[13px] font-bold text-white`}>70</span>
      </div>
    </div>
  );
}
